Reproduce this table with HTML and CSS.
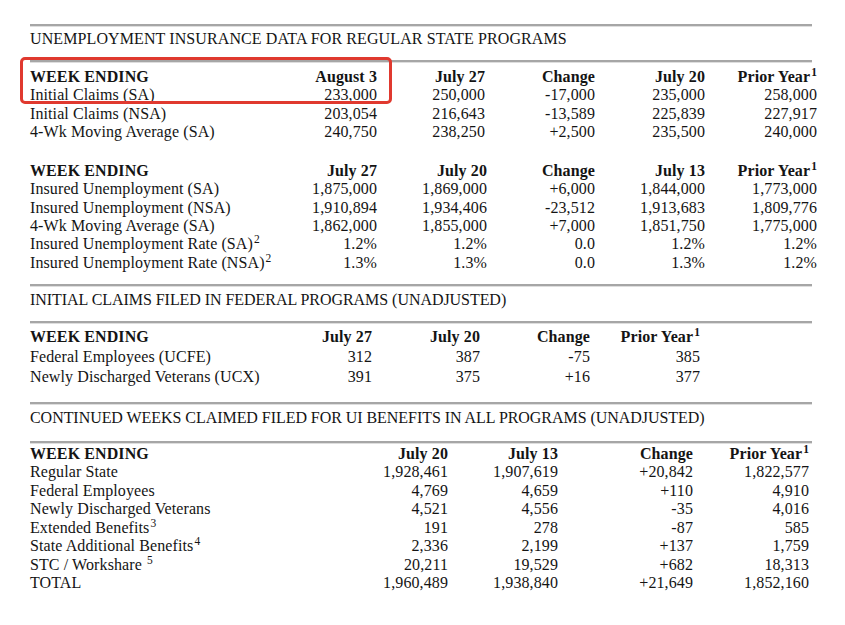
FILE: index.html
```html
<!DOCTYPE html>
<html lang="en">
<head>
<meta charset="utf-8">
<title>Unemployment Insurance Weekly Claims</title>
<link rel="stylesheet" href="styles.css">
</head>
<body>
<div class="page">
  <div class="rule"></div>
  <div class="title t1">UNEMPLOYMENT INSURANCE DATA FOR REGULAR STATE PROGRAMS</div>
  <div class="rule r2"></div>

  <div class="sec sec1">
    <div class="highlight"></div>
    <div class="grid cols1">
      <div class="cell lbl hd">WEEK ENDING</div>
      <div class="cell num hd">August 3</div>
      <div class="cell num hd">July 27</div>
      <div class="cell num hd">Change</div>
      <div class="cell num hd">July 20</div>
      <div class="cell num hd">Prior Year<sup>1</sup></div>

      <div class="cell lbl">Initial Claims (SA)</div>
      <div class="cell num">233,000</div>
      <div class="cell num">250,000</div>
      <div class="cell num">-17,000</div>
      <div class="cell num">235,000</div>
      <div class="cell num">258,000</div>

      <div class="cell lbl">Initial Claims (NSA)</div>
      <div class="cell num">203,054</div>
      <div class="cell num">216,643</div>
      <div class="cell num">-13,589</div>
      <div class="cell num">225,839</div>
      <div class="cell num">227,917</div>

      <div class="cell lbl">4-Wk Moving Average (SA)</div>
      <div class="cell num">240,750</div>
      <div class="cell num">238,250</div>
      <div class="cell num">+2,500</div>
      <div class="cell num">235,500</div>
      <div class="cell num">240,000</div>
    </div>
  </div>

  <div class="sec sec2">
    <div class="grid cols2">
      <div class="cell lbl hd">WEEK ENDING</div>
      <div class="cell num hd">July 27</div>
      <div class="cell num hd">July 20</div>
      <div class="cell num hd">Change</div>
      <div class="cell num hd">July 13</div>
      <div class="cell num hd">Prior Year<sup>1</sup></div>

      <div class="cell lbl">Insured Unemployment (SA)</div>
      <div class="cell num">1,875,000</div>
      <div class="cell num">1,869,000</div>
      <div class="cell num">+6,000</div>
      <div class="cell num">1,844,000</div>
      <div class="cell num">1,773,000</div>

      <div class="cell lbl">Insured Unemployment (NSA)</div>
      <div class="cell num">1,910,894</div>
      <div class="cell num">1,934,406</div>
      <div class="cell num">-23,512</div>
      <div class="cell num">1,913,683</div>
      <div class="cell num">1,809,776</div>

      <div class="cell lbl">4-Wk Moving Average (SA)</div>
      <div class="cell num">1,862,000</div>
      <div class="cell num">1,855,000</div>
      <div class="cell num">+7,000</div>
      <div class="cell num">1,851,750</div>
      <div class="cell num">1,775,000</div>

      <div class="cell lbl">Insured Unemployment Rate (SA)<sup>2</sup></div>
      <div class="cell num">1.2%</div>
      <div class="cell num">1.2%</div>
      <div class="cell num">0.0</div>
      <div class="cell num">1.2%</div>
      <div class="cell num">1.2%</div>

      <div class="cell lbl">Insured Unemployment Rate (NSA)<sup>2</sup></div>
      <div class="cell num">1.3%</div>
      <div class="cell num">1.3%</div>
      <div class="cell num">0.0</div>
      <div class="cell num">1.3%</div>
      <div class="cell num">1.2%</div>
    </div>
  </div>

  <div class="rule r3"></div>
  <div class="title t3">INITIAL CLAIMS FILED IN FEDERAL PROGRAMS (UNADJUSTED)</div>
  <div class="rule r4"></div>

  <div class="sec sec3">
    <div class="grid cols3">
      <div class="cell lbl hd">WEEK ENDING</div>
      <div class="cell num hd">July 27</div>
      <div class="cell num hd">July 20</div>
      <div class="cell num hd">Change</div>
      <div class="cell num hd">Prior Year<sup>1</sup></div>

      <div class="cell lbl">Federal Employees (UCFE)</div>
      <div class="cell num">312</div>
      <div class="cell num">387</div>
      <div class="cell num">-75</div>
      <div class="cell num">385</div>

      <div class="cell lbl">Newly Discharged Veterans (UCX)</div>
      <div class="cell num">391</div>
      <div class="cell num">375</div>
      <div class="cell num">+16</div>
      <div class="cell num">377</div>
    </div>
  </div>

  <div class="rule r5"></div>
  <div class="title t4">CONTINUED WEEKS CLAIMED FILED FOR UI BENEFITS IN ALL PROGRAMS (UNADJUSTED)</div>
  <div class="rule r6"></div>

  <div class="sec sec4">
    <div class="grid cols4">
      <div class="cell lbl hd">WEEK ENDING</div>
      <div class="cell num hd">July 20</div>
      <div class="cell num hd">July 13</div>
      <div class="cell num hd">Change</div>
      <div class="cell num hd">Prior Year<sup>1</sup></div>

      <div class="cell lbl">Regular State</div>
      <div class="cell num">1,928,461</div>
      <div class="cell num">1,907,619</div>
      <div class="cell num">+20,842</div>
      <div class="cell num">1,822,577</div>

      <div class="cell lbl">Federal Employees</div>
      <div class="cell num">4,769</div>
      <div class="cell num">4,659</div>
      <div class="cell num">+110</div>
      <div class="cell num">4,910</div>

      <div class="cell lbl">Newly Discharged Veterans</div>
      <div class="cell num">4,521</div>
      <div class="cell num">4,556</div>
      <div class="cell num">-35</div>
      <div class="cell num">4,016</div>

      <div class="cell lbl">Extended Benefits<sup>3</sup></div>
      <div class="cell num">191</div>
      <div class="cell num">278</div>
      <div class="cell num">-87</div>
      <div class="cell num">585</div>

      <div class="cell lbl">State Additional Benefits<sup>4</sup></div>
      <div class="cell num">2,336</div>
      <div class="cell num">2,199</div>
      <div class="cell num">+137</div>
      <div class="cell num">1,759</div>

      <div class="cell lbl">STC / Workshare <sup>5</sup></div>
      <div class="cell num">20,211</div>
      <div class="cell num">19,529</div>
      <div class="cell num">+682</div>
      <div class="cell num">18,313</div>

      <div class="cell lbl">TOTAL</div>
      <div class="cell num">1,960,489</div>
      <div class="cell num">1,938,840</div>
      <div class="cell num">+21,649</div>
      <div class="cell num">1,852,160</div>
    </div>
  </div>
</div>
</body>
</html>
```

FILE: styles.css
```css
html, body {
  margin: 0;
  padding: 0;
  background: #ffffff;
}

body {
  font-family: "Liberation Serif", "Times New Roman", serif;
  font-size: 16px;
  letter-spacing: 0.1px;
  color: #141414;
}

.page {
  padding: 24px 0 0 30px;
  width: 815px;
  box-sizing: border-box;
}

.rule {
  width: 782px;
  height: 0;
  border-top: 2px solid #a6a6a6;
  border-bottom: 1px solid #dedede;
}

.title {
  line-height: 18px;
  white-space: nowrap;
  margin-top: 3px;
  margin-bottom: 12px;
}

.t3 { margin-top: 4px; margin-bottom: 12px; letter-spacing: -0.05px; }
.t4 { margin-top: 4px; margin-bottom: 14px; letter-spacing: -0.05px; }

.sec {
  position: relative;
}

.sec1 { margin-top: 5px; }
.sec2 { margin-top: 21px; margin-bottom: 12px; }
.sec3 { margin-top: 3px; margin-bottom: 15px; }
.sec4 { margin-top: 1px; }

.grid {
  display: grid;
  line-height: 18.3px;
}

.cols1 { grid-template-columns: 247px 100px 108px 110px 110px 112px; }
.cols2 { grid-template-columns: 247px 100px 110px 108px 110px 112px; }
.cols3 { grid-template-columns: 242px 100px 108px 110px 110px; line-height: 20px; }
.cols4 { grid-template-columns: 318px 100px 110px 135px 116px; line-height: 18.5px; }

.cell {
  white-space: nowrap;
}

.num {
  text-align: right;
}

.hd {
  font-weight: bold;
}

sup {
  font-size: 11.5px;
  line-height: 0;
  vertical-align: 6px;
  margin-left: 1px;
}

.hd sup {
  font-weight: bold;
}

.highlight {
  position: absolute;
  left: -10px;
  top: -11px;
  width: 372px;
  height: 47px;
  box-sizing: border-box;
  border: 3px solid #e0392f;
  border-radius: 5px;
  pointer-events: none;
}
```
